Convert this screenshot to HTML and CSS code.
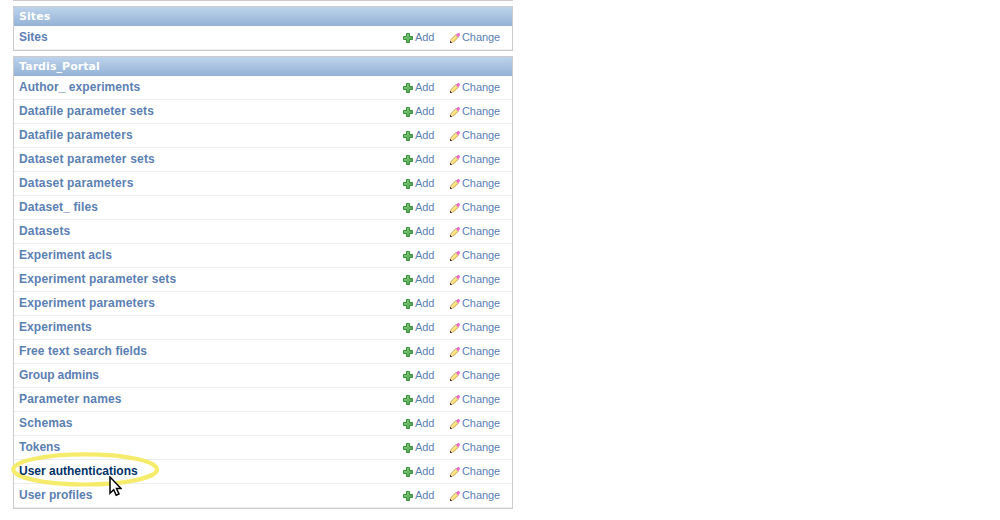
FILE: index.html
```html
<!DOCTYPE html>
<html lang="en">
<head>
<meta charset="utf-8">
<title>Site administration</title>
<link rel="stylesheet" href="styles.css">
</head>
<body>
<svg class="defs" aria-hidden="true">
  <defs>
    <linearGradient id="green" x1="0" y1="0" x2="1" y2="1"><stop offset="0" stop-color="#8fd083"/><stop offset="1" stop-color="#43a047"/></linearGradient>
    <symbol id="plus" viewBox="0 0 10 10">
      <path d="M3.5 .5h3v3h3v3h-3v3h-3v-3h-3v-3h3z" fill="url(#green)" stroke="#36913a"/>
    </symbol>
    <symbol id="pencil" viewBox="0 0 10 10">
      <path d="M.6 9.4 1.2 6.3 6.2 1.3 8.7 3.8 3.7 8.8z" fill="#fbdf6c" stroke="#b98f45" stroke-width=".8"/>
      <path d="M2.1 6.9 6.5 2.5" stroke="#fff3bd" stroke-width=".9"/>
      <path d="M1 6.8 3.2 9 .8 9.5z" fill="#f7e3c4"/>
      <path d="M0 10V7.8L2.2 10z" fill="#30241c"/>
      <path d="M5.9 2 7.7 0H9L10 1V2.4L8.1 4.2z" fill="#ec74d6"/>
      <path d="M5.5 2 8 4.5" stroke="#c9b5ad" stroke-width=".8"/>
    </symbol>
  </defs>
</svg>
<main class="content">
  <div class="module module-end"></div>
  <section class="module">
    <h2 class="caption">Sites</h2>
    <div class="row"><a class="model">Sites</a><a class="add"><svg class="icon"><use href="#plus"/></svg>Add</a><a class="change"><svg class="icon"><use href="#pencil"/></svg>Change</a></div>
  </section>
  <section class="module">
    <h2 class="caption">Tardis_Portal</h2>
    <div class="row"><a class="model loose">Author_ experiments</a><a class="add"><svg class="icon"><use href="#plus"/></svg>Add</a><a class="change"><svg class="icon"><use href="#pencil"/></svg>Change</a></div>
    <div class="row"><a class="model wide">Datafile parameter sets</a><a class="add"><svg class="icon"><use href="#plus"/></svg>Add</a><a class="change"><svg class="icon"><use href="#pencil"/></svg>Change</a></div>
    <div class="row"><a class="model wide">Datafile parameters</a><a class="add"><svg class="icon"><use href="#plus"/></svg>Add</a><a class="change"><svg class="icon"><use href="#pencil"/></svg>Change</a></div>
    <div class="row"><a class="model wider">Dataset parameter sets</a><a class="add"><svg class="icon"><use href="#plus"/></svg>Add</a><a class="change"><svg class="icon"><use href="#pencil"/></svg>Change</a></div>
    <div class="row"><a class="model wider">Dataset parameters</a><a class="add"><svg class="icon"><use href="#plus"/></svg>Add</a><a class="change"><svg class="icon"><use href="#pencil"/></svg>Change</a></div>
    <div class="row"><a class="model wide">Dataset_ files</a><a class="add"><svg class="icon"><use href="#plus"/></svg>Add</a><a class="change"><svg class="icon"><use href="#pencil"/></svg>Change</a></div>
    <div class="row"><a class="model wider">Datasets</a><a class="add"><svg class="icon"><use href="#plus"/></svg>Add</a><a class="change"><svg class="icon"><use href="#pencil"/></svg>Change</a></div>
    <div class="row"><a class="model loose">Experiment acls</a><a class="add"><svg class="icon"><use href="#plus"/></svg>Add</a><a class="change"><svg class="icon"><use href="#pencil"/></svg>Change</a></div>
    <div class="row"><a class="model wide">Experiment parameter sets</a><a class="add"><svg class="icon"><use href="#plus"/></svg>Add</a><a class="change"><svg class="icon"><use href="#pencil"/></svg>Change</a></div>
    <div class="row"><a class="model wide">Experiment parameters</a><a class="add"><svg class="icon"><use href="#plus"/></svg>Add</a><a class="change"><svg class="icon"><use href="#pencil"/></svg>Change</a></div>
    <div class="row"><a class="model loose">Experiments</a><a class="add"><svg class="icon"><use href="#plus"/></svg>Add</a><a class="change"><svg class="icon"><use href="#pencil"/></svg>Change</a></div>
    <div class="row"><a class="model loose">Free text search fields</a><a class="add"><svg class="icon"><use href="#plus"/></svg>Add</a><a class="change"><svg class="icon"><use href="#pencil"/></svg>Change</a></div>
    <div class="row"><a class="model tight">Group admins</a><a class="add"><svg class="icon"><use href="#plus"/></svg>Add</a><a class="change"><svg class="icon"><use href="#pencil"/></svg>Change</a></div>
    <div class="row"><a class="model wider">Parameter names</a><a class="add"><svg class="icon"><use href="#plus"/></svg>Add</a><a class="change"><svg class="icon"><use href="#pencil"/></svg>Change</a></div>
    <div class="row"><a class="model wide">Schemas</a><a class="add"><svg class="icon"><use href="#plus"/></svg>Add</a><a class="change"><svg class="icon"><use href="#pencil"/></svg>Change</a></div>
    <div class="row"><a class="model">Tokens</a><a class="add"><svg class="icon"><use href="#plus"/></svg>Add</a><a class="change"><svg class="icon"><use href="#pencil"/></svg>Change</a></div>
    <div class="row highlighted">
      <svg class="ring" viewBox="0 0 150 36"><ellipse cx="75.2" cy="17.4" rx="71.8" ry="15.1"/></svg>
      <a class="model active">User authentications</a><a class="add"><svg class="icon"><use href="#plus"/></svg>Add</a><a class="change"><svg class="icon"><use href="#pencil"/></svg>Change</a>
      <svg class="cursor" viewBox="0 0 13 21"><path d="M1 1V17.2L4.7 13.8 7.2 19.3 10 18 7.5 12.6H12z"/></svg>
    </div>
    <div class="row"><a class="model">User profiles</a><a class="add"><svg class="icon"><use href="#plus"/></svg>Add</a><a class="change"><svg class="icon"><use href="#pencil"/></svg>Change</a></div>
  </section>
</main>
</body>
</html>
```
FILE: styles.css
```css
body {
  margin: 0;
  background: #fff;
  color: #5b80b2;
  font-family: "Liberation Sans", Arial, sans-serif;
  overflow: hidden;
}
.defs { display: block; width: 0; height: 0; }
.content {
  display: flex;
  flex-direction: column;
  gap: 5px;
  width: 500px;
  margin-left: 13px;
}
.module {
  border: 1px solid #ccc;
  background: #fff;
}
.module-end { border-top: 0; }
.caption {
  margin: 0;
  height: 19px;
  padding-left: 5px;
  background: linear-gradient(#bcd3eb, #94b2d5);
  color: #fff;
  font: bold 11px/20px "DejaVu Sans", Verdana, sans-serif;
  letter-spacing: 0.06px;
}
.row {
  display: grid;
  grid-template-columns: 384px 47px 1fr;
  height: 23px;
  padding-left: 5px;
  border-bottom: 1px solid #eee;
}
.model { font-size: 12px; font-weight: bold; line-height: 22px; }
.tight { letter-spacing: -0.12px; }
.loose { letter-spacing: 0.06px; }
.wide { letter-spacing: 0.125px; }
.wider { letter-spacing: 0.175px; }
.active { color: #036; }
.add, .change {
  display: flex;
  gap: 2px;
  font-size: 11px;
  line-height: 22px;
  letter-spacing: -0.08px;
}
.icon { width: 10px; height: 10px; margin-top: 7px; }
.highlighted { position: relative; }
.ring {
  position: absolute;
  left: -4px;
  top: -8px;
  width: 150px;
  height: 36px;
  fill: none;
  stroke: #f6ec6c;
  stroke-width: 4.2;
}
.highlighted .model { position: relative; }
.cursor {
  position: absolute;
  z-index: 1;
  left: 95px;
  top: 16px;
  width: 13px;
  height: 21px;
  fill: #fff;
  stroke: #000;
  stroke-width: 1.5;
}
```
